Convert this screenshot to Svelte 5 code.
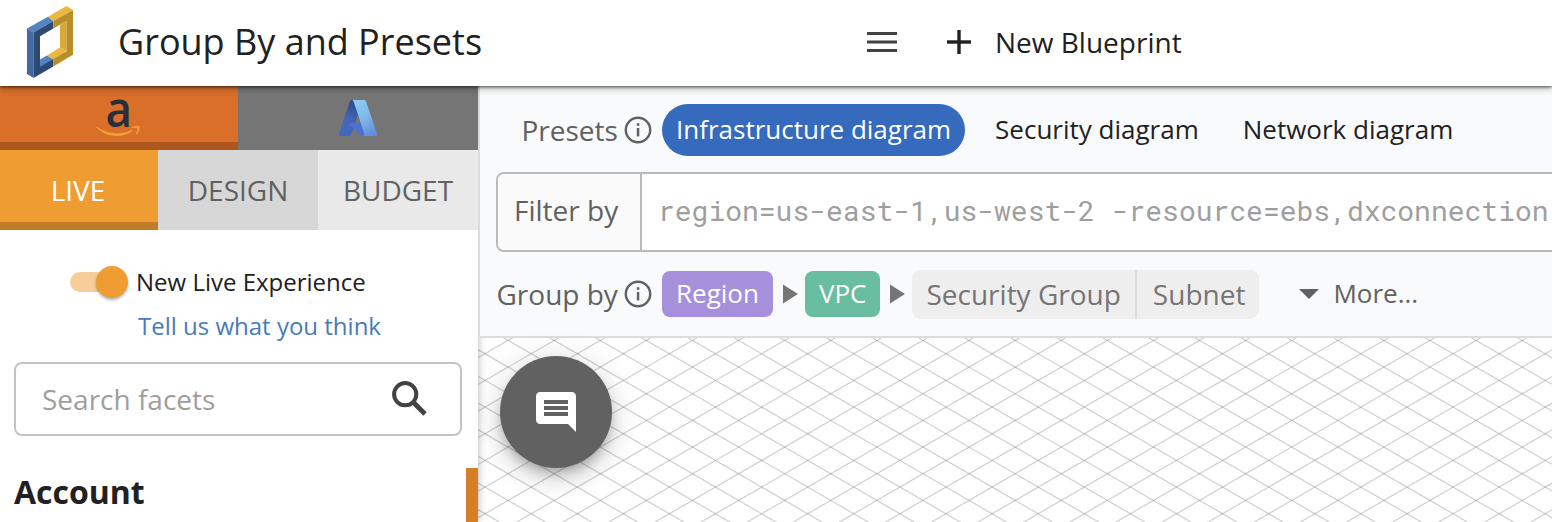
<script>
  const stepX = 46.095;
  const stepY = 26.667;
  const originX = 30.1;
  const originY = 2.4;
  const slope = stepY / stepX;
  const width = 1074;

  const falling = Array.from({ length: 34 }, (_, i) => {
    const y = originY - originX * slope + (i - 25) * stepY;
    return `M0 ${y}L${width} ${y + width * slope}`;
  }).join('');

  const rising = Array.from({ length: 34 }, (_, i) => {
    const y = originY + originX * slope + (i - 1) * stepY;
    return `M0 ${y}L${width} ${y - width * slope}`;
  }).join('');

  const presets = [
    { name: 'Infrastructure diagram', active: true },
    { name: 'Security diagram', active: false },
    { name: 'Network diagram', active: false }
  ];
</script>

{#snippet info()}
  <svg class="info" width="28" height="28" viewBox="0 0 28 28">
    <circle cx="14" cy="14" r="12.2" fill="none" stroke="#616161" stroke-width="2.4" />
    <rect x="12.8" y="7.2" width="2.5" height="2.6" fill="#616161" />
    <rect x="12.8" y="12" width="2.5" height="8.4" fill="#616161" />
  </svg>
{/snippet}

<div class="app">
  <header>
    <svg class="logo" width="48" height="74" viewBox="26 5 48 74">
      <path fill="#5582c2" d="M27 28.5 48 16.8l5.3 4.2-19.8 11.5z" />
      <path fill="#e9b840" d="M48 16.8 66.5 6 73 10 53.3 21z" />
      <path fill="#42699f" d="M27 28.5l6.5 4V78L27 74z" />
      <path fill="#dba737" d="M60 25l6.6-4v30.2L60 47.5z" />
      <path fill="#5582c2" d="M40 59.5l7-4 6.3 3.7L40 66.8z" />
      <path fill="#e9b840" d="M47 55.5l13-8 6.6 3.7-13.3 8z" />
      <path fill="#2c4a73" d="M33.5 32.5 53.3 21v7.6L40 36.2v30.4l13.3-7.7v7.6L33.5 78z" />
      <path fill="#b88e29" d="M53.3 21 73 10v44.7L53.3 66.5v-7.6l13.3-7.7V21l-13.3 7.6z" />
    </svg>
    <h1>Group By and Presets</h1>
    <svg class="menu" width="30" height="20" viewBox="0 0 30 20" fill="#424242">
      <rect width="30" height="3" /><rect y="8.5" width="30" height="3" /><rect y="17" width="30" height="3" />
    </svg>
    <svg class="plus" width="24" height="24" viewBox="0 0 24 24" fill="#212121">
      <rect x="10.3" width="3.4" height="24" /><rect y="10.3" width="24" height="3.4" />
    </svg>
    <span class="new">New Blueprint</span>
  </header>

  <div class="body">
    <aside>
      <div class="clouds">
        <div class="aws">
          <svg width="48" height="44" viewBox="94 96 48 44">
            <text x="105.6" y="127.3" font-family="Open Sans, sans-serif" font-weight="600" font-size="48" textLength="26.5" lengthAdjust="spacingAndGlyphs" fill="#252f3e">a</text>
            <path fill="#f19d33" d="M96.5 126.6c6 4.2 13 6.6 20.200 6.600 5.400 0 10.300-1.200 15-3.300.9-.4 1.500.6.7 1.200-4.200 3.300-9.900 5-15.300 5-8 0-15-3-20.900-8.600-.6-.5-.3-1.200.3-.9z" />
            <path fill="#f19d33" d="M139.600 126.500c.8 1.200-.2 5.600-3 8.100-.4.400-1 .2-.8-.4.700-1.700 1.900-4.900 1.300-5.700-.6-.8-3.900-.4-5.600-.2-.6.100-.7-.4-.1-.8 2.800-1.900 7.500-1.700 8.200-1z" />
          </svg>
        </div>
        <div class="azure">
          <svg width="38" height="36" viewBox="4 6.5 88.200 83" preserveAspectRatio="none">
            <defs>
              <linearGradient id="az1" x1="0.6" y1="0" x2="0.3" y2="1">
                <stop offset="0" stop-color="#2f4a86" /><stop offset=".55" stop-color="#4464b8" /><stop offset="1" stop-color="#4669bd" />
              </linearGradient>
              <linearGradient id="az2" x1="0.3" y1="0" x2="0.7" y2="1">
                <stop offset="0" stop-color="#8ecaf3" /><stop offset=".5" stop-color="#7db8ea" /><stop offset="1" stop-color="#648edb" />
              </linearGradient>
            </defs>
            <path fill="url(#az1)" d="M33.338 6.544h26.038l-27.030 80.087a4.152 4.152 0 0 1-3.933 2.824H8.149a4.145 4.145 0 0 1-3.928-5.470L29.404 9.368a4.152 4.152 0 0 1 3.934-2.825z" />
            <path fill="#4c72d1" d="M71.175 60.261h-41.290a1.911 1.911 0 0 0-1.305 3.309l26.532 24.764a4.171 4.171 0 0 0 2.846 1.121h23.380z" />
            <path fill="url(#az2)" d="M66.595 9.364a4.145 4.145 0 0 0-3.928-2.820H33.648a4.146 4.146 0 0 1 3.928 2.820l25.184 74.620a4.146 4.146 0 0 1-3.928 5.472h29.020a4.146 4.146 0 0 0 3.927-5.472z" />
          </svg>
        </div>
      </div>
      <div class="tabs">
        <div class="tab live">LIVE</div>
        <div class="tab design">DESIGN</div>
        <div class="tab budget">BUDGET</div>
      </div>
      <div class="toggle">
        <span class="track"><span class="knob"></span></span>
        <span class="tlabel">New Live Experience</span>
      </div>
      <span class="link">Tell us what you think</span>
      <div class="search">
        <span>Search facets</span>
        <svg width="36" height="36" viewBox="0 0 36 36" fill="none" stroke="#424242">
          <circle cx="13.200" cy="13.200" r="11.100" stroke-width="4" />
          <path d="M21.800 21.800 33 33" stroke-width="4.800" />
        </svg>
      </div>
      <div class="facet">
        <h2>Account</h2>
        <span class="bar"></span>
      </div>
    </aside>

    <main>
      <section class="toolbar">
        <div class="row presets">
          <span class="label">Presets</span>
          {@render info()}
          <div class="pills">
            {#each presets as p}
              <span class="pill" class:active={p.active}>{p.name}</span>
            {/each}
          </div>
        </div>
        <div class="filter">
          <span class="flabel">Filter by</span>
          <span class="query">region=us-east-1,us-west-2 -resource=ebs,dxconnection</span>
        </div>
        <div class="row group">
          <span class="label">Group by</span>
          {@render info()}
          <span class="chip region">Region</span>
          <svg class="arrow" width="15" height="20" viewBox="0 0 15 20"><path fill="#757575" d="M0 0.500 15 10 0 19.500z" /></svg>
          <span class="chip vpc">VPC</span>
          <svg class="arrow" width="15" height="20" viewBox="0 0 15 20"><path fill="#757575" d="M0 0.500 15 10 0 19.500z" /></svg>
          <div class="seg"><span class="sg">Security Group</span><span class="sn">Subnet</span></div>
          <svg class="caret" width="20" height="10" viewBox="0 0 20 10"><path fill="#616161" d="M0 0h20L10 10z" /></svg>
          <span class="more">More...</span>
        </div>
      </section>
      <section class="canvas">
        <svg width="1074" height="184" viewBox="0 0 1074 184" fill="none" stroke="rgba(100, 102, 118, 0.3)" stroke-width="1.250">
          <path d={falling} />
          <path d={rising} />
        </svg>
      </section>
    </main>
  </div>

  <div class="fab">
    <svg width="48" height="48" viewBox="0 0 24 24" fill="#fff">
      <path d="M21.990 4c0-1.100-.89-2-1.990-2H4c-1.100 0-2 .9-2 2v12c0 1.100.9 2 2 2h14l4 4-.01-18zM18 14H6v-2h12v2zm0-3H6V9h12v2zm0-3H6V6h12v2z" />
    </svg>
  </div>
</div>

<style>
  :global(body) { margin: 0; overflow: hidden; }
  .app {
    position: relative;
    width: 1552px;
    height: 522px;
    overflow: hidden;
    background: #fff;
    color: #212121;
    font-family: 'Open Sans', sans-serif;
    display: flex;
    flex-direction: column;
    white-space: nowrap;
  }
  svg { display: block; flex: none; overflow: visible; }
  header {
    position: relative;
    z-index: 3;
    box-sizing: border-box;
    height: 86px;
    flex: none;
    display: flex;
    align-items: center;
    padding-left: 26px;
    background: #fff;
    box-shadow: 0 1px 3px rgba(0, 0, 0, 0.6), 0 2px 8px rgba(0, 0, 0, 0.3);
  }
  .logo { margin-top: -2px; }
  h1 { margin: -2px 0 0 44px; width: 749px; font-size: 36px; font-weight: 400; line-height: 50px; }
  .menu { margin-top: -2px; }
  .plus { margin: -2px 0 0 50px; }
  .new { margin: -2px 0 0 24px; font-size: 28px; line-height: 40px; }
  .body { display: flex; flex: 1; min-height: 0; }
  aside {
    position: relative;
    z-index: 1;
    width: 478px;
    flex: none;
    background: #fff;
    display: flex;
    flex-direction: column;
    box-shadow: 0 0 8px rgba(0, 0, 0, 0.3);
  }
  .clouds { display: flex; height: 64px; flex: none; }
  .aws {
    box-sizing: border-box;
    width: 238px;
    background: #d96f29;
    border-bottom: 8px solid #ad571e;
    padding: 10px 0 0 94px;
  }
  .azure { flex: 1; background: #757575; padding: 14px 0 0 101px; }
  .tabs { display: flex; height: 80px; flex: none; font-size: 28px; color: #616161; }
  .tab { width: 160px; height: 80px; line-height: 80px; text-align: center; }
  .tab.live {
    box-sizing: border-box;
    width: 158px;
    padding-right: 2px;
    background: #ef9d33;
    border-bottom: 8px solid #c07c27;
    color: #fff;
  }
  .design { background: #d7d7d7; }
  .budget { background: #e9e9e9; }
  .toggle { display: flex; align-items: center; height: 32px; margin: 36px 0 0 70px; }
  .track {
    width: 56px;
    height: 20px;
    border-radius: 10px;
    background: #f7ce99;
    display: flex;
    align-items: center;
    justify-content: flex-end;
  }
  .knob {
    width: 32px;
    height: 32px;
    flex: none;
    margin-right: -2px;
    border-radius: 50%;
    background: #ef9d33;
    box-shadow: 0 2px 3px rgba(0, 0, 0, 0.3);
  }
  .tlabel { margin-left: 10px; font-size: 24px; line-height: 32px; }
  .link { margin: 12px 0 0 138px; font-size: 24px; line-height: 32px; color: #4a7ab8; }
  .search {
    box-sizing: border-box;
    width: 448px;
    height: 74px;
    margin: 20px 0 0 14px;
    padding: 0 32px 0 26px;
    border: 2px solid #c4c4c4;
    border-radius: 8px;
    display: flex;
    align-items: center;
    justify-content: space-between;
    font-size: 28px;
    color: #9e9e9e;
  }
  .facet { display: flex; justify-content: space-between; height: 54px; margin-top: 32px; padding-left: 14px; }
  h2 { margin: 0; font-size: 32px; line-height: 48px; font-weight: 700; }
  .bar { width: 12px; background: #d67e28; }
  main { flex: 1; min-width: 0; display: flex; flex-direction: column; }
  .toolbar {
    position: relative;
    z-index: 2;
    box-sizing: border-box;
    height: 252px;
    flex: none;
    border-left: 2px solid #dcdcdc;
    border-bottom: 2px solid #dcdedd;
    background: #f9fafc;
    padding: 18px 0 0 16px;
    overflow: hidden;
  }
  .row { display: flex; align-items: center; }
  .presets { height: 52px; }
  .label { box-sizing: border-box; width: 128px; font-size: 28px; line-height: 40px; color: #616161; }
  .presets .label { padding-left: 25.5px; }
  .pills { display: flex; gap: 16px; margin-left: 10px; }
  .pill { height: 52px; line-height: 51px; padding: 0 14px; border-radius: 26px; font-size: 26px; }
  .pill.active { background: #356abd; color: #fff; }
  .filter {
    box-sizing: border-box;
    height: 80px;
    width: 1100px;
    margin-top: 16px;
    border: 2px solid #bababa;
    border-radius: 8px;
    display: flex;
    background: #fff;
    line-height: 76px;
    overflow: hidden;
  }
  .flabel {
    box-sizing: border-box;
    width: 144px;
    height: 76px;
    line-height: 73px;
    padding-left: 16px;
    border-right: 2px solid #bababa;
    background: #fafafa;
    color: #616161;
    font-size: 28px;
  }
  .query {
    padding-left: 16px;
    line-height: 74px;
    font-family: 'Roboto Mono', 'Liberation Mono', monospace;
    font-size: 28px;
    color: #9e9e9e;
  }
  .group { height: 50px; margin-top: 17px; }
  .group .label { padding-left: 0.5px; }
  .chip { height: 46px; line-height: 44px; padding: 0 14px; border-radius: 8px; font-size: 26px; color: #fff; }
  .region { margin-left: 10px; background: #a690dc; }
  .vpc { background: #69bda0; }
  .arrow { margin: 0 7px 0 10px; }
  .seg { display: flex; height: 49px; line-height: 49px; border-radius: 9px; background: #eee; font-size: 28px; color: #757575; }
  .sg { padding: 0 14px; border-right: 2px solid #dcdcdc; }
  .sn { padding: 0 14px 0 16px; }
  .caret { margin-left: 40px; }
  .more { margin: -2px 0 0 14px; font-size: 26px; color: #616161; }
  .canvas { flex: 1; background: #fff; overflow: hidden; }
  .fab {
    position: absolute;
    z-index: 4;
    left: 500px;
    top: 356px;
    width: 112px;
    height: 112px;
    border-radius: 50%;
    background: #616161;
    display: flex;
    align-items: center;
    justify-content: center;
    box-shadow: 0 6px 10px -2px rgba(0, 0, 0, 0.2), 0 12px 20px rgba(0, 0, 0, 0.14), 0 2px 36px rgba(0, 0, 0, 0.12);
  }
</style>
